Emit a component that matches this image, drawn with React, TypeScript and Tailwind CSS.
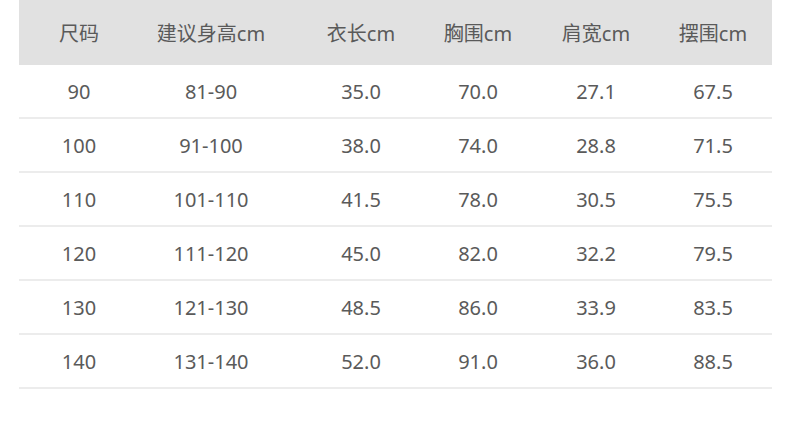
import React from "react";

const headers = ["尺码", "建议身高cm", "衣长cm", "胸围cm", "肩宽cm", "摆围cm"];
const rows = [
  ["90", "81-90", "35.0", "70.0", "27.1", "67.5"],
  ["100", "91-100", "38.0", "74.0", "28.8", "71.5"],
  ["110", "101-110", "41.5", "78.0", "30.5", "75.5"],
  ["120", "111-120", "45.0", "82.0", "32.2", "79.5"],
  ["130", "121-130", "48.5", "86.0", "33.9", "83.5"],
  ["140", "131-140", "52.0", "91.0", "36.0", "88.5"],
];

const grid = "grid grid-cols-[120px_144px_156px_78px_158px_76px] pr-[21px]";

export default function App() {
  return (
    <div
      className="w-[790px] h-[431px] bg-white text-[#5a5a5a] text-[20px]"
      style={{ fontFamily: '"Noto Sans", "Noto Sans CJK SC", sans-serif' }}
    >
      <div className="ml-[19px] w-[753px]">
        <div className={`${grid} h-[65px] items-center bg-[#e1e1e1] pt-[2px]`}>
          {headers.map((h) => (
            <div key={h} className="text-center leading-none">
              {h}
            </div>
          ))}
        </div>
        {rows.map((r, i) => (
          <div
            key={i}
            className={`${grid} h-[54px] items-center border-b-2 border-[#ececec] pt-[2px]`}
          >
            {r.map((c, j) => (
              <div key={j} className="text-center leading-none">
                {c}
              </div>
            ))}
          </div>
        ))}
      </div>
    </div>
  );
}
